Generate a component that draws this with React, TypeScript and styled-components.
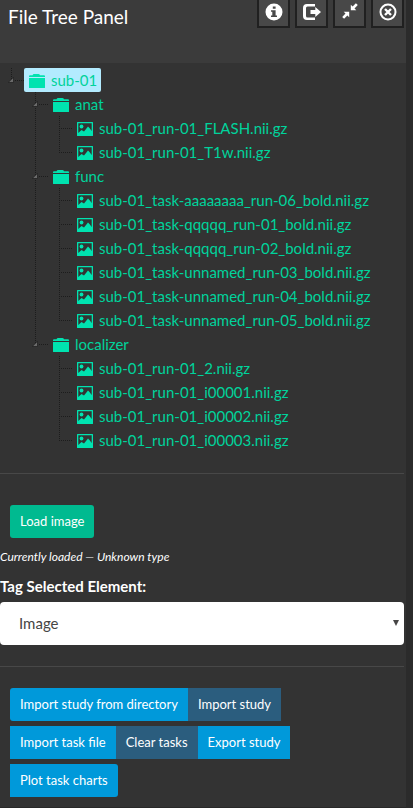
import React, { useState } from "react";
import styled, { createGlobalStyle, css } from "styled-components";

const GlobalStyle = createGlobalStyle`
  *, *::before, *::after { box-sizing: border-box; }
  body {
    margin: 0;
    background: #2b2b2b;
    color: #fff;
    font: 15px/24px Lato, sans-serif;
  }
`;

const Panel = styled.div`
  margin-right: 7px;
  background: #333;
  border-bottom: 1px solid #292929;
`;

const Header = styled.header`
  display: flex;
  align-items: flex-start;
  justify-content: space-between;
  height: 63px;
  padding: 0 2px 0 8px;
  background: #3b3b3b;
`;

const Title = styled.h4`
  margin: 5px 0 0;
  font-size: 19px;
  font-weight: 400;
  line-height: 24px;
`;

const Tools = styled.div`
  display: flex;
  gap: 5px;
`;

const ToolButton = styled.button`
  display: flex;
  align-items: flex-start;
  justify-content: center;
  width: 33px;
  height: 28px;
  padding: 3px 0 0;
  border: 2px solid #202020;
  border-top: 0;
  background: #484848;
  color: #fff;
  cursor: pointer;
`;

const Body = styled.main`
  padding: 5px 2px 10px 0;
`;

const TreeList = styled.ul<{ $nested?: boolean }>`
  margin: 0;
  padding: 0 0 0 ${(p) => (p.$nested ? "24px" : "0")};
  list-style: none;
`;

const TreeItem = styled.li`
  background: repeating-linear-gradient(to bottom, #1c1c1c 0 1px, transparent 1px 2px) 11px 0 / 1px 100% no-repeat;
  &:last-child {
    background-size: 1px 12px;
  }
`;

const TreeRow = styled.div`
  display: flex;
  height: 24px;
`;

const Gutter = styled.span`
  width: 24px;
  background: repeating-linear-gradient(to right, #1c1c1c 0 1px, transparent 1px 2px) 11px 12px / 13px 1px no-repeat;
`;

const Toggle = styled.button`
  display: flex;
  width: 24px;
  height: 24px;
  padding: 9px 0 0 8px;
  border: 0;
  background: repeating-linear-gradient(to right, #1c1c1c 0 1px, transparent 1px 2px) 15px 12px / 9px 1px no-repeat;
  cursor: pointer;
`;

const NodeLink = styled.a<{ $selected?: boolean }>`
  display: flex;
  align-items: center;
  height: 24px;
  padding: 0 4px 0 5px;
  gap: 6px;
  border-radius: 2px;
  color: #00d39c;
  text-decoration: none;
  white-space: nowrap;
  ${(p) => p.$selected && css`background: #b3ebff;`}
  svg {
    margin-top: 2px;
    color: #00e3b0;
  }
`;

const Divider = styled.hr`
  margin: 21px 0;
  border: 0;
  border-top: 1px solid #484848;
`;

const ButtonGroup = styled.div`
  display: flex;
  flex-wrap: wrap;
  padding: 0 10px;
`;

const LoadBar = styled.div`
  padding: 10px 10px 0;
`;

const tones = { success: "#00ba90", primary: "#0099da", muted: "#2b5d7e" };

const ActionButton = styled.button<{ $tone: keyof typeof tones; $round?: string }>`
  display: block;
  height: 33px;
  padding: 0 10px 2px;
  border: 0;
  border-radius: ${(p) => p.$round ?? "0"};
  background: ${(p) => tones[p.$tone]};
  color: #fff;
  font: 13px/20px Lato, sans-serif;
  cursor: pointer;
`;

const RowBreak = styled.span`
  flex-basis: 100%;
  height: 5px;
`;

const Status = styled.p`
  margin: 9px 0;
  font-size: 12px;
  font-style: italic;
  line-height: 20px;
`;

const FieldLabel = styled.label`
  display: block;
  margin-bottom: 6px;
  font-weight: 700;
  line-height: 20px;
`;

const SelectWrap = styled.div`
  position: relative;
  svg {
    position: absolute;
    right: 5px;
    top: 18px;
    pointer-events: none;
  }
`;

const Select = styled.select`
  display: block;
  width: 100%;
  height: 43px;
  padding: 0 19px 2px;
  border: 0;
  border-radius: 4px;
  appearance: none;
  background: #fff;
  color: #464545;
  font: 15px/24px Lato, sans-serif;
`;

const FolderIcon = () => (
  <svg width="16" height="14" viewBox="0 0 16 14" fill="currentColor" aria-hidden="true">
    <path d="M0 3V2.2Q0 1.2 1 1.2H3.500Q4 0 5 0H9.500Q10.500 0 11 1.200H15Q16 1.200 16 2.200V3ZM0 4H16V13.500Q16 14 15.500 14H.5Q0 14 0 13.500Z" />
  </svg>
);

const PictureIcon = () => (
  <svg width="16" height="14" viewBox="0 0 16 14" fill="currentColor" aria-hidden="true">
    <path fillRule="evenodd" d="M.5 0H15.500Q16 0 16 .5V13.500Q16 14 15.500 14H.5Q0 14 0 13.500V.5Q0 0 .5 0ZM1.300 1.300V11L4.500 8L7 9.500L11 4.500L12.500 6L14.700 9V1.300Z" />
    <circle cx="4.500" cy="4.500" r="1.900" />
  </svg>
);

const ToggleIcon = () => (
  <svg width="6" height="6" viewBox="0 0 6 6" aria-hidden="true">
    <path d="M5.500 .2V5.500H.2Z" fill="#6a6a6a" stroke="#222" strokeWidth=".8" />
  </svg>
);

const InfoIcon = () => (
  <svg width="18" height="18" viewBox="0 0 18 18" fill="currentColor" aria-hidden="true">
    <path fillRule="evenodd" d="M9 .5A8.500 8.500 0 1 1 9 17.500A8.500 8.500 0 1 1 9 .5ZM7.800 3.400V5.800H10.600V3.400ZM6 7.200V8.700H7.300V12.600H6V14.100H12V12.600H10.600V7.200Z" />
  </svg>
);

const LogOutIcon = () => (
  <svg width="20" height="18" viewBox="0 0 20 18" fill="currentColor" aria-hidden="true">
    <path d="M13 1H5Q1 1 1 5V13Q1 17 5 17H13V14.500H5.500Q4 14.500 4 13V5Q4 3.500 5.500 3.500H13Z" />
    <path d="M13.300 4L19 9L13.300 14V11H8.500V7H13.300Z" />
  </svg>
);

const ShrinkIcon = () => (
  <svg width="16" height="16" viewBox="0 0 16 16" fill="currentColor" aria-hidden="true">
    <path d="M8.800 1.700L10.600 3.500L13.900 .2L15.800 2.100L12.500 5.400L14.300 7.200H8.800Z" />
    <path d="M7.200 14.300L5.400 12.500L2.100 15.800L.2 13.900L3.500 10.600L1.700 8.800H7.200Z" />
  </svg>
);

const CloseIcon = () => (
  <svg width="18" height="18" viewBox="0 0 18 18" fill="none" stroke="currentColor" aria-hidden="true">
    <circle cx="9" cy="9" r="7.500" strokeWidth="2" />
    <path d="M6 6L12 12M12 6L6 12" strokeWidth="2.400" />
  </svg>
);

interface TreeNode {
  name: string;
  children?: TreeNode[];
}

const files = (...names: string[]): TreeNode[] => names.map((name) => ({ name }));

const study: TreeNode = {
  name: "sub-01",
  children: [
    { name: "anat", children: files("sub-01_run-01_FLASH.nii.gz", "sub-01_run-01_T1w.nii.gz") },
    {
      name: "func",
      children: files(
        "sub-01_task-aaaaaaaa_run-06_bold.nii.gz",
        "sub-01_task-qqqqq_run-01_bold.nii.gz",
        "sub-01_task-qqqqq_run-02_bold.nii.gz",
        "sub-01_task-unnamed_run-03_bold.nii.gz",
        "sub-01_task-unnamed_run-04_bold.nii.gz",
        "sub-01_task-unnamed_run-05_bold.nii.gz"
      ),
    },
    {
      name: "localizer",
      children: files(
        "sub-01_run-01_2.nii.gz",
        "sub-01_run-01_i00001.nii.gz",
        "sub-01_run-01_i00002.nii.gz",
        "sub-01_run-01_i00003.nii.gz"
      ),
    },
  ],
};

interface NodeProps {
  node: TreeNode;
  selected: string;
  onSelect: (name: string) => void;
}

function Node({ node, selected, onSelect }: NodeProps) {
  const [open, setOpen] = useState(true);
  return (
    <TreeItem>
      <TreeRow>
        {node.children ? (
          <Toggle aria-label={`Toggle ${node.name}`} aria-expanded={open} onClick={() => setOpen(!open)}>
            <ToggleIcon />
          </Toggle>
        ) : (
          <Gutter />
        )}
        <NodeLink
          href="#"
          $selected={selected === node.name}
          onClick={(e) => {
            e.preventDefault();
            onSelect(node.name);
          }}
        >
          {node.children ? <FolderIcon /> : <PictureIcon />}
          {node.name}
        </NodeLink>
      </TreeRow>
      {node.children && open && (
        <TreeList $nested>
          {node.children.map((child) => (
            <Node key={child.name} node={child} selected={selected} onSelect={onSelect} />
          ))}
        </TreeList>
      )}
    </TreeItem>
  );
}

export default function App() {
  const [selected, setSelected] = useState("sub-01");
  return (
    <>
      <GlobalStyle />
      <Panel>
        <Header>
          <Title>File Tree Panel</Title>
          <Tools>
            <ToolButton aria-label="Info"><InfoIcon /></ToolButton>
            <ToolButton aria-label="Undock"><LogOutIcon /></ToolButton>
            <ToolButton aria-label="Minimize"><ShrinkIcon /></ToolButton>
            <ToolButton aria-label="Close"><CloseIcon /></ToolButton>
          </Tools>
        </Header>
        <Body>
          <TreeList>
            <Node node={study} selected={selected} onSelect={setSelected} />
          </TreeList>
          <Divider />
          <LoadBar>
            <ActionButton $tone="success" $round="3px">Load image</ActionButton>
          </LoadBar>
          <Status>Currently loaded — Unknown type</Status>
          <FieldLabel htmlFor="tag">Tag Selected Element:</FieldLabel>
          <SelectWrap>
            <Select id="tag" defaultValue="Image">
              <option>Image</option>
            </Select>
            <svg width="6" height="6" viewBox="0 0 6 6" aria-hidden="true">
              <path d="M0 0H6L3 6Z" fill="#464545" />
            </svg>
          </SelectWrap>
          <Divider />
          <ButtonGroup>
            <ActionButton $tone="primary" $round="3px 0 0 3px">Import study from directory</ActionButton>
            <ActionButton $tone="muted">Import study</ActionButton>
            <RowBreak />
            <ActionButton $tone="primary">Import task file</ActionButton>
            <ActionButton $tone="muted">Clear tasks</ActionButton>
            <ActionButton $tone="primary">Export study</ActionButton>
            <RowBreak />
            <ActionButton $tone="primary" $round="0 3px 3px 0">Plot task charts</ActionButton>
          </ButtonGroup>
        </Body>
      </Panel>
    </>
  );
}
